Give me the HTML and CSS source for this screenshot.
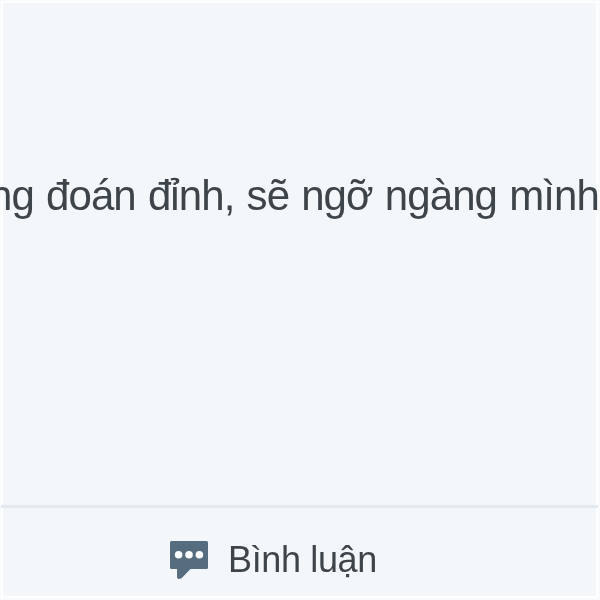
FILE: index.html
```html
<!DOCTYPE html>
<html lang="vi">
<head>
<meta charset="utf-8">
<title>Bình luận</title>
<link rel="stylesheet" href="styles.css">
</head>
<body>
<main class="post">
  <p class="message">ng đoán đỉnh, sẽ ngỡ ngàng mình</p>
  <footer class="actions">
    <button class="comment" type="button">
      <svg class="icon" viewBox="0 0 40 40" aria-hidden="true">
        <path class="bubble" d="M2.500 1h35q1.500 0 1.500 1.500v25q0 1.500-1.500 1.500H21.500L12.500 38.300Q8 40 8 37V29H2.500q-1.500 0-1.500-1.500v-25q0-1.500 1.500-1.500z"/>
        <circle class="dot" cx="9.600" cy="14.700" r="3.800"/>
        <circle class="dot" cx="20" cy="14.700" r="3.800"/>
        <circle class="dot" cx="30.400" cy="14.700" r="3.800"/>
      </svg>
      <span class="label">Bình luận</span>
    </button>
  </footer>
</main>
</body>
</html>
```
FILE: styles.css
```css
* { box-sizing: border-box; }
body {
  margin: 0;
  width: 600px;
  height: 600px;
  overflow: hidden;
  padding: 1px 2px 2px 1px;
  background: #f8fafc;
  font-family: "Liberation Sans", Arial, sans-serif;
}
.post {
  display: flex;
  flex-direction: column;
  height: 597px;
  background: #f4f7fa;
  border: 2px solid #fdfefe;
}
.message {
  flex: 1;
  margin: 0 0 0 -14px;
  padding-top: 169px;
  font-size: 42px;
  line-height: 48px;
  letter-spacing: -0.9px;
  word-spacing: 1.3px;
  white-space: nowrap;
  color: #3e454a;
  filter: blur(0.6px);
}
.actions {
  display: flex;
  height: 91px;
  margin: 0 -2px;
  padding-left: 167.6px;
  border-top: 3px solid #e2eaf0;
}
.comment {
  display: flex;
  align-items: center;
  gap: 19.4px;
  height: 104px;
  padding: 0;
  border: 0;
  background: none;
  font: inherit;
}
.icon { width: 40px; height: 40px; filter: blur(0.4px); }
.bubble { fill: #566d7f; }
.dot { fill: #fcfdfe; }
.label {
  font-size: 36px;
  line-height: 42px;
  letter-spacing: -0.35px;
  color: #3e454a;
  white-space: nowrap;
  filter: blur(0.6px);
}
```
